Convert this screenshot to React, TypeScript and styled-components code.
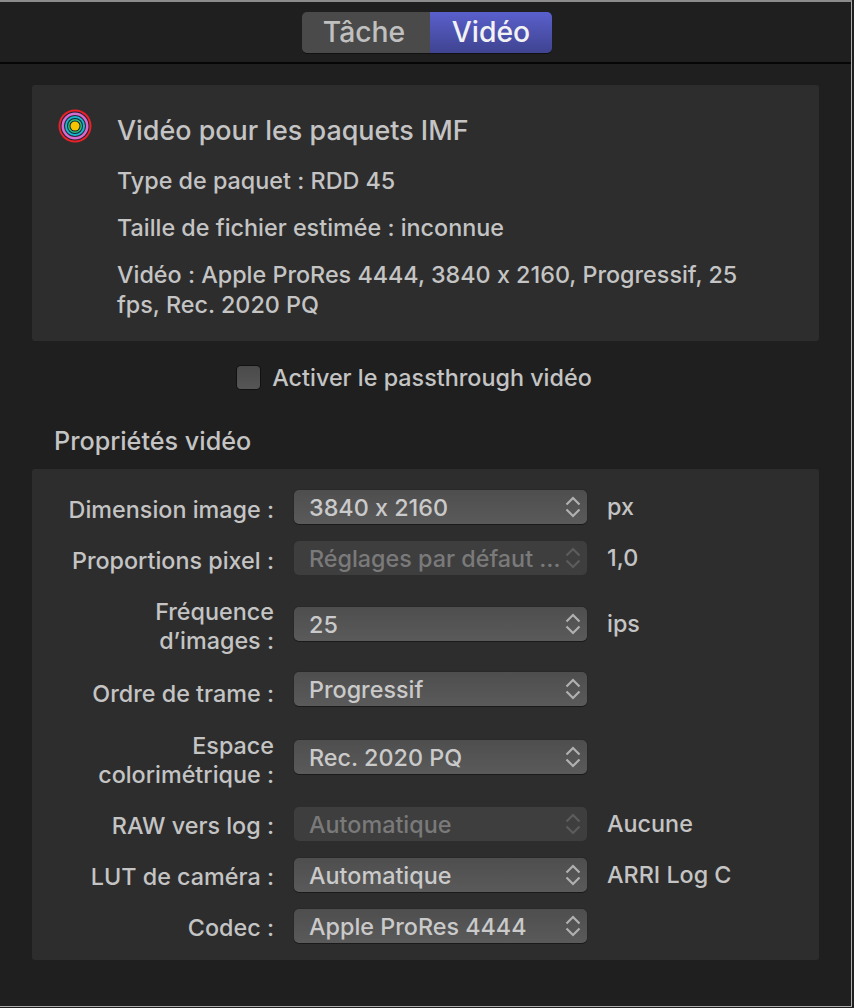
import React from "react";
import styled, { createGlobalStyle } from "styled-components";

const Global = createGlobalStyle`
  html, body { margin: 0; padding: 0; background: #1f1f1f; }
  body {
    font-family: "Inter", "Liberation Sans", sans-serif;
    font-feature-settings: "calt" 0;
    font-weight: 450;
    -webkit-font-smoothing: antialiased;
  }
`;

const Window = styled.div`
  width: 852px;
  height: 1007px;
  box-sizing: border-box;
  background: #1f1f1f;
  border-top: 2px solid #8c8c8c;
  border-bottom: 1px solid #b0b0b0;
  border-right: 1px solid #b0b0b0;
  overflow: hidden;
`;

const Toolbar = styled.div`
  height: 62px;
  box-sizing: border-box;
  padding-top: 10px;
  border-bottom: 2px solid #060606;
  display: flex;
  justify-content: center;
`;

const Segmented = styled.div`
  width: 250px;
  height: 41px;
  display: flex;
  border-radius: 5px;
  overflow: hidden;
  box-shadow: 0 1px 0 #111;
  margin-left: 3px;
`;

const Segment = styled.div<{ $active?: boolean }>`
  flex: ${(p) => (p.$active ? "0 0 122px" : "1")};
  display: flex;
  align-items: center;
  justify-content: center;
  box-sizing: border-box;
  padding: ${(p) => (p.$active ? "0 0 2px" : "0 4px 2px 0")};
  font-size: 28.3px;
  color: ${(p) => (p.$active ? "#f2f2f2" : "#c0c0c0")};
  background: ${(p) => (p.$active ? "linear-gradient(#5a60cc, #3f4390)" : "#4a4a4a")};
`;

const Content = styled.div`
  padding: 21px 32px 0 32px;
`;

const Card = styled.section`
  background: #2d2d2d;
  border-radius: 3px;
`;

const SummaryCard = styled(Card)`
  height: 256px;
  box-sizing: border-box;
  padding: 28px 40px 0 26px;
  display: flex;
  gap: 23px;
`;

const Icon = styled.div`
  flex: none;
  margin-top: -4px;
  height: 36px;
`;

const Summary = styled.div`
  flex: 1;
  color: #c4c4c4;
  font-size: 23.35px;
`;

const SummaryTitle = styled.div`
  font-size: 26.9px;
  line-height: 34px;
  margin-bottom: 19px;
`;

const SummaryLine = styled.div`
  line-height: 30px;
  margin-bottom: 17px;
`;

const CheckRow = styled.label`
  display: flex;
  align-items: center;
  justify-content: center;
  gap: 12px;
  height: 36px;
  margin-top: 18px;
  padding-right: 22px;
  color: #c4c4c4;
  font-size: 23.35px;
`;

const CheckBox = styled.span`
  width: 23px;
  height: 23px;
  border-radius: 4px;
  background: linear-gradient(#4a4a4a, #565656);
  box-shadow: 0 0 0 1px #111;
`;

const SectionTitle = styled.h2`
  margin: 31px 0 0 22px;
  height: 43px;
  line-height: 30px;
  font-size: 25.2px;
  font-weight: 450;
  color: #c4c4c4;
`;

const FormCard = styled(Card)`
  height: 491px;
  box-sizing: border-box;
  padding-top: 21px;
  display: flex;
  flex-direction: column;
`;

const Row = styled.div<{ $h: number }>`
  height: ${(p) => p.$h}px;
  display: grid;
  grid-template-columns: 242px 293px auto;
  column-gap: 20px;
  align-items: start;
`;

const Label = styled.div<{ $dy: number }>`
  text-align: right;
  font-size: 23.35px;
  line-height: 29px;
  color: #c4c4c4;
  margin-top: ${(p) => p.$dy}px;
`;

const Select = styled.div<{ $disabled?: boolean }>`
  height: 34px;
  box-sizing: border-box;
  padding: 0 6px 0 15px;
  display: flex;
  align-items: center;
  justify-content: space-between;
  border-radius: 5px;
  font-size: 23.35px;
  white-space: nowrap;
  color: ${(p) => (p.$disabled ? "#7a7a7a" : "#cacaca")};
  background: ${(p) => (p.$disabled ? "#3e3e3e" : "linear-gradient(#4e4e4e, #5a5a5a)")};
  box-shadow: ${(p) => (p.$disabled ? "none" : "0 0 1px #111, 0 1px 0 #1c1c1c")};
`;

const Unit = styled.div`
  font-size: 23.35px;
  line-height: 29px;
  margin-top: 2px;
  color: #c4c4c4;
  white-space: nowrap;
`;

const Target = () => (
  <svg width="36" height="36" viewBox="0 0 36 36">
    <circle cx="17" cy="17" r="16.5" fill="#ea2228" />
    <circle cx="17" cy="17" r="14.5" fill="#1d1d2a" />
    <circle cx="17" cy="17" r="13.5" fill="#d76bd0" />
    <circle cx="17" cy="17" r="11" fill="#2a2a3a" />
    <circle cx="17" cy="17" r="10" fill="#16b6d0" />
    <circle cx="17" cy="17" r="8" fill="#123" />
    <circle cx="17" cy="17" r="7" fill="#2fbf7f" />
    <circle cx="17" cy="17" r="5.5" fill="#123" />
    <circle cx="17" cy="17" r="4.5" fill="#f7c400" />
  </svg>
);

const Stepper = ({ dim }: { dim?: boolean }) => (
  <svg width="16" height="24" viewBox="0 0 16 24" fill="none" stroke={dim ? "#5c5c5c" : "#b0b0b0"} strokeWidth="2.2">
    <path d="M1.5 9.5 8 3l6.5 6.5" />
    <path d="M1.5 14.5 8 21l6.5-6.5" />
  </svg>
);

const rows: { label: React.ReactNode; value: string; unit?: string; disabled?: boolean; h: number; dy: number }[] = [
  { label: "Dimension image :", value: "3840 x 2160", unit: "px", h: 51, dy: 5 },
  { label: "Proportions pixel :", value: "Réglages par défaut …", unit: "1,0", disabled: true, h: 66, dy: 5 },
  { label: <>Fréquence<br />d’images :</>, value: "25", unit: "ips", h: 65, dy: -10 },
  { label: "Ordre de trame :", value: "Progressif", h: 68, dy: 7 },
  { label: <>Espace<br />colorimétrique :</>, value: "Rec. 2020 PQ", h: 67, dy: -9 },
  { label: "RAW vers log :", value: "Automatique", unit: "Aucune", disabled: true, h: 51, dy: 4 },
  { label: "LUT de caméra :", value: "Automatique", unit: "ARRI Log C", h: 51, dy: 4 },
  { label: "Codec :", value: "Apple ProRes 4444", h: 51, dy: 4 },
];

export default function App() {
  return (
    <Window>
      <Global />
      <Toolbar>
        <Segmented>
          <Segment>Tâche</Segment>
          <Segment $active>Vidéo</Segment>
        </Segmented>
      </Toolbar>
      <Content>
        <SummaryCard>
          <Icon>
            <Target />
          </Icon>
          <Summary>
            <SummaryTitle>Vidéo pour les paquets IMF</SummaryTitle>
            <SummaryLine>Type de paquet : RDD 45</SummaryLine>
            <SummaryLine>Taille de fichier estimée : inconnue</SummaryLine>
            <SummaryLine>Vidéo : Apple ProRes 4444, 3840 x 2160, Progressif, 25 fps, Rec. 2020 PQ</SummaryLine>
          </Summary>
        </SummaryCard>
        <CheckRow>
          <CheckBox />
          Activer le passthrough vidéo
        </CheckRow>
        <SectionTitle>Propriétés vidéo</SectionTitle>
        <FormCard>
          {rows.map((r, i) => (
            <Row key={i} $h={r.h}>
              <Label $dy={r.dy}>{r.label}</Label>
              <Select $disabled={r.disabled}>
                {r.value}
                <Stepper dim={r.disabled} />
              </Select>
              {r.unit ? <Unit>{r.unit}</Unit> : <span />}
            </Row>
          ))}
        </FormCard>
      </Content>
    </Window>
  );
}
